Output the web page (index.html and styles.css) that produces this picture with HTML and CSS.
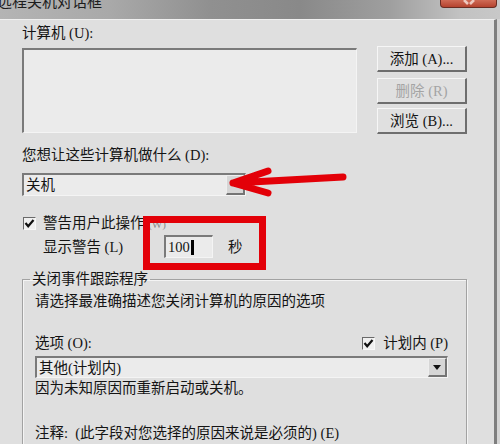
FILE: index.html
```html
<!DOCTYPE html>
<html lang="zh-CN">
<head>
<meta charset="utf-8">
<title>远程关机对话框</title>
<link rel="stylesheet" href="styles.css">
</head>
<body>
<div class="titlebar">
  <span class="title">远程关机对话框</span>
  <span class="close"><svg class="close-x" width="16" height="6" viewBox="0 0 16 6"><path d="M3 0 L7 4 M13 0 L9 4" stroke="#eec8bf" stroke-width="2.6" fill="none"/></svg></span>
</div>
<div class="frame">
  <div class="dialog">
    <div class="label l-computer">计算机 (U):</div>
    <div class="row-list">
      <div class="listbox"></div>
      <div class="btns">
        <div class="btn b1">添加 (A)...</div>
        <div class="btn b2 disabled">删除 (R)</div>
        <div class="btn b3">浏览 (B)...</div>
      </div>
    </div>
    <div class="label l-what">您想让这些计算机做什么 (D):</div>
    <div class="combo c-action">
      <span class="combo-text">关机</span>
      <span class="drop"><svg width="8" height="5" viewBox="0 0 8 5"><path d="M0 0 H8 L4 5 Z" fill="#111"/></svg></span>
    </div>
    <div class="check-row">
      <span class="checkbox"><svg width="11" height="11" viewBox="0 0 11 11"><path d="M1.5 5 L4.2 8.2 L9.5 2" stroke="#111" stroke-width="2.2" fill="none"/></svg></span>
      <span class="check-label">警告用户此操作 <span class="faint">(W)</span></span>
    </div>
    <div class="warn-row">
      <span class="warn-label">显示警告 (L)</span>
      <span class="spin">100<span class="caret"></span></span>
      <span class="sec">秒</span>
    </div>
    <fieldset class="group">
      <legend>关闭事件跟踪程序</legend>
      <div class="g-desc">请选择最准确描述您关闭计算机的原因的选项</div>
      <div class="opt-row">
        <span>选项 (O):</span>
        <span class="plan">
          <span class="checkbox"><svg width="11" height="11" viewBox="0 0 11 11"><path d="M1.5 5 L4.2 8.2 L9.5 2" stroke="#111" stroke-width="2.2" fill="none"/></svg></span>
          <span>计划内 (P)</span>
        </span>
      </div>
      <div class="combo c-reason">
        <span class="combo-text">其他(计划内)</span>
        <span class="drop"><svg width="8" height="5" viewBox="0 0 8 5"><path d="M0 0 H8 L4 5 Z" fill="#111"/></svg></span>
      </div>
      <div class="g-note">因为未知原因而重新启动或关机。</div>
      <div class="g-comment">注释: &nbsp;(此字段对您选择的原因来说是必须的) (E)</div>
    </fieldset>
  </div>
</div>
<svg class="annot-arrow" width="500" height="444" viewBox="0 0 500 444">
  <path d="M343 177 L233 183 M268 171 L233 183 L268 193" stroke="#e30008" stroke-width="7" stroke-linecap="round" stroke-linejoin="round" fill="none"/>
</svg>
<div class="annot-box"></div>
</body>
</html>
```

FILE: styles.css
```css
* { box-sizing: border-box; }
html, body { margin: 0; padding: 0; }
body {
  width: 500px;
  height: 444px;
  overflow: hidden;
  background: #d4d4d4;
  font-family: "Liberation Serif", "Noto Sans CJK SC", serif;
  font-size: 14.5px;
  line-height: 16px;
  color: #141414;
  position: relative;
}
.titlebar {
  height: 19px;
  width: 500px;
  display: flex;
  align-items: flex-start;
  overflow: hidden;
  background: linear-gradient(90deg, #b4b4b4 0%, #a9a9a9 22%, #909090 42%, #898989 60%, #9f9f9f 78%, #c2c2c2 92%, #c8c8c8 100%);
}
.title {
  font-family: "Noto Sans CJK SC", sans-serif;
  font-size: 15px;
  line-height: 16px;
  margin-top: -7px;
  margin-left: -3px;
  color: #1d1d1d;
  white-space: nowrap;
}
.close {
  margin-left: auto;
  margin-right: 3px;
  width: 57px;
  height: 8px;
  background: linear-gradient(#cf6a55, #b5432f);
  border: 1px solid #6a2c22;
  border-top: none;
  border-radius: 0 0 4px 4px;
  display: flex;
  justify-content: center;
}
.close-x { display: block; }
.frame {
  width: 497px;
  height: 425px;
  background: #dfdfdf;
  border-top: 1px solid #f0f0f0;
  border-right: 3px solid #7e7e7e;
}
.dialog {
  display: flex;
  flex-direction: column;
  align-items: flex-start;
  padding-left: 22px;
}
.label { white-space: nowrap; }
.l-computer { margin-top: 5px; }
.row-list { display: flex; margin-top: 5px; }
.listbox {
  width: 335px;
  height: 85px;
  margin-top: 2px;
  background: #ebebeb;
  border-top: 2px solid #7a7a7a;
  border-left: 2px solid #7a7a7a;
  border-right: 1px solid #f4f4f4;
  border-bottom: 1px solid #f4f4f4;
}
.btns { display: flex; flex-direction: column; margin-left: 20px; }
.btn {
  width: 90px;
  height: 26px;
  display: flex;
  align-items: center;
  justify-content: center;
  background: #e0e0e0;
  border-top: 1px solid #f6f6f6;
  border-left: 1px solid #f6f6f6;
  border-right: 2px solid #6e6e6e;
  border-bottom: 2px solid #6e6e6e;
  white-space: nowrap;
}
.b2 { margin-top: 6px; }
.b3 { margin-top: 4px; }
.disabled { color: #a4a4a4; }
.l-what { margin-top: 13px; }
.combo {
  display: flex;
  align-items: stretch;
  height: 23px;
  background: #ebebeb;
  border-top: 2px solid #7a7a7a;
  border-left: 2px solid #7a7a7a;
  border-right: 1px solid #f4f4f4;
  border-bottom: 1px solid #f4f4f4;
}
.c-action { width: 224px; margin-top: 10px; }
.combo-text { flex: 1; padding-left: 2px; display: flex; align-items: center; white-space: nowrap; }
.drop {
  width: 19px;
  display: flex;
  align-items: center;
  justify-content: center;
  background: #d6d6d6;
  border-top: 1px solid #eeeeee;
  border-left: 1px solid #eeeeee;
  border-right: 2px solid #747474;
  border-bottom: 2px solid #747474;
}
.drop svg { display: block; }
.check-row { display: flex; align-items: center; margin-top: 19px; padding-left: 1px; }
.checkbox {
  width: 13px;
  height: 13px;
  display: flex;
  align-items: center;
  justify-content: center;
  background: #f0f0f0;
  border-top: 1px solid #6a6a6a;
  border-left: 1px solid #6a6a6a;
  border-right: 1px solid #f8f8f8;
  border-bottom: 1px solid #f8f8f8;
}
.checkbox svg { display: block; }
.check-label { margin-left: 7px; white-space: nowrap; }
.faint { font-size: 11px; color: #8a8a8a; }
.warn-row { display: flex; align-items: center; margin-top: 3px; padding-left: 21px; }
.warn-label { width: 121px; white-space: nowrap; }
.spin {
  width: 49px;
  height: 23px;
  display: flex;
  align-items: center;
  padding-left: 2px;
  background: #ebebeb;
  border-top: 2px solid #7a7a7a;
  border-left: 2px solid #7a7a7a;
  border-right: 1px solid #f4f4f4;
  border-bottom: 1px solid #f4f4f4;
  font-size: 14.5px;
}
.caret { width: 3px; height: 15px; background: #000; margin-left: 1px; }
.sec { margin-left: 15px; }
.group {
  margin: 13px 0 0 0;
  width: 445px;
  height: 174px;
  padding: 6px 0 0 12px;
  border: 1px solid #a2a2a2;
  border-bottom: none;
  box-shadow: inset 1px 1px 0 #f4f4f4, 1px 1px 0 #f4f4f4;
  min-width: 0;
}
.group legend {
  padding: 0 2px;
  margin-left: -5px;
  line-height: 16px;
  white-space: nowrap;
}
.g-desc { white-space: nowrap; }
.opt-row {
  width: 413px;
  display: flex;
  justify-content: space-between;
  align-items: center;
  margin-top: 26px;
}
.plan { display: flex; align-items: center; }
.plan .checkbox { margin-right: 8px; }
.c-reason { width: 413px; height: 22px; margin-top: 5px; }
.g-note { margin-top: 2px; white-space: nowrap; }
.g-comment { margin-top: 29px; white-space: nowrap; }
.annot-arrow { position: absolute; left: 0; top: 0; pointer-events: none; }
.annot-box {
  position: absolute;
  left: 143px;
  top: 216px;
  width: 123px;
  height: 54px;
  border: 7px solid #e30008;
}
```
